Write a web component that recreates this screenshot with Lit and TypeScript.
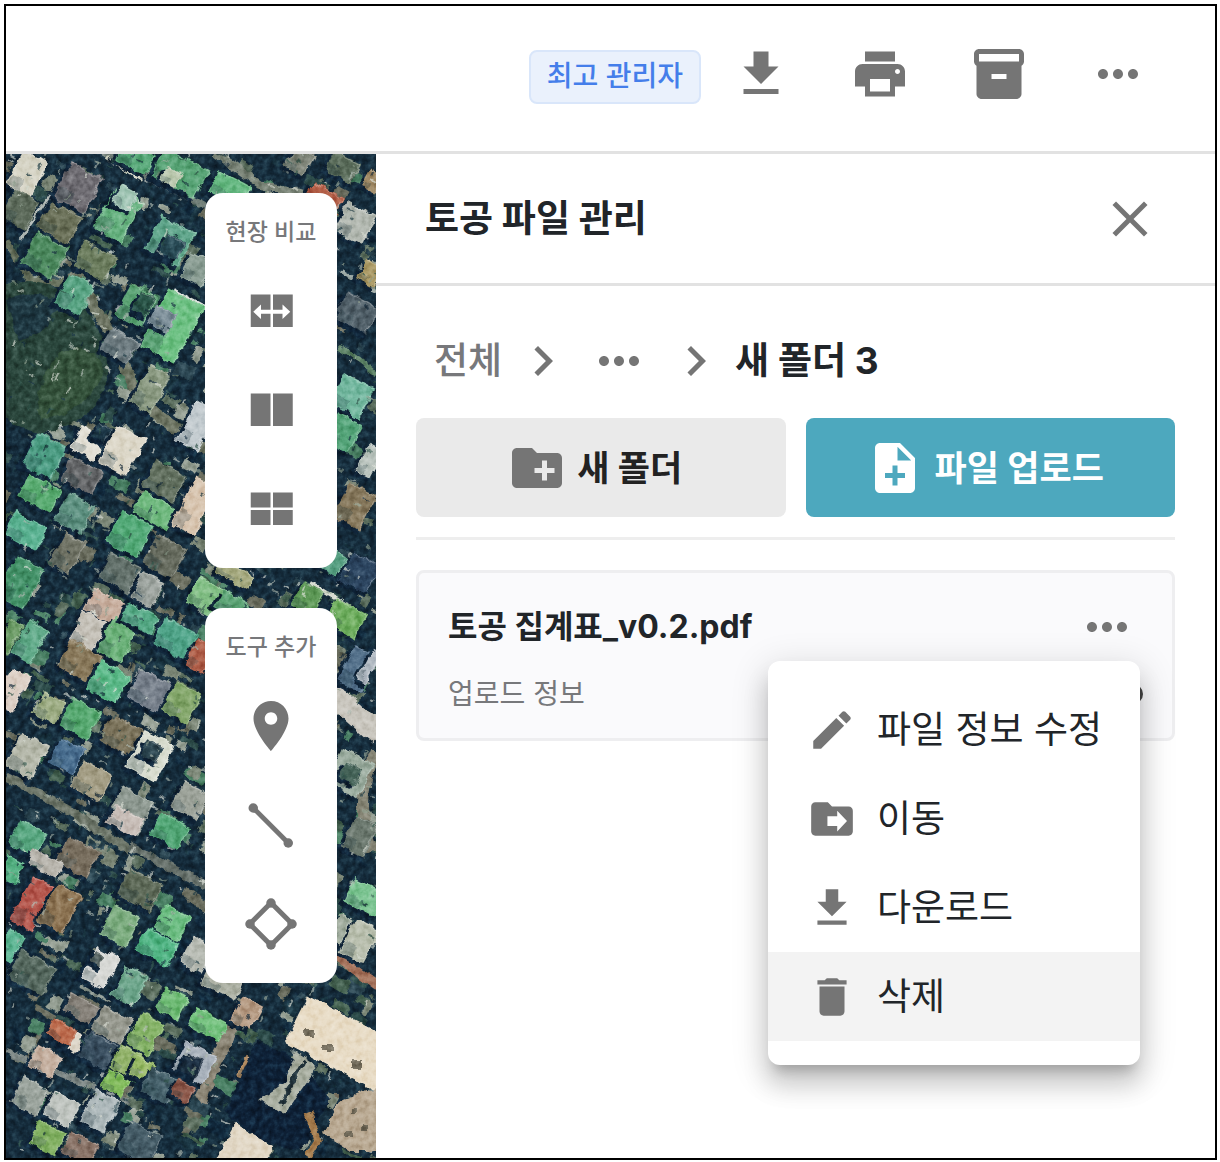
import { LitElement, html, svg, css } from "lit";
import { customElement, property, state } from "lit/decorators.js";

const ICONS: Record<string, unknown> = {
  download: svg`<path d="M19 9h-4V3H9v6H5l7 7 7-7zM5 18v2h14v-2H5z"/>`,
  print: svg`<path d="M19 8H5c-1.66 0-3 1.34-3 3v6h4v4h12v-4h4v-6c0-1.66-1.34-3-3-3zm-3 11H8v-5h8v5zm3-7c-.55 0-1-.45-1-1s.45-1 1-1 1 .45 1 1-.45 1-1 1zm-1-9H6v4h12V3z"/>`,
  archive: svg`<path d="M20 2H4c-1 0-2 .9-2 2v3.01c0 .72.43 1.34 1 1.69V20c0 1.1 1.1 2 2 2h14c.9 0 2-.9 2-2V8.7c.57-.35 1-.97 1-1.69V4c0-1.1-1-2-2-2zm-5 12H9v-2h6v2zm5-7H4V4h16v3z"/>`,
  more: svg`<path d="M6 10c-1.1 0-2 .9-2 2s.9 2 2 2 2-.9 2-2-.9-2-2-2zm12 0c-1.1 0-2 .9-2 2s.9 2 2 2 2-.9 2-2-.9-2-2-2zm-6 0c-1.1 0-2 .9-2 2s.9 2 2 2 2-.9 2-2-.9-2-2-2z"/>`,
  close: svg`<path d="M19 6.41L17.59 5 12 10.59 6.41 5 5 6.41 10.59 12 5 17.59 6.41 19 12 13.41 17.59 19 19 17.59 13.41 12z"/>`,
  chevron: svg`<path d="M10 6L8.59 7.41 13.17 12l-4.58 4.59L10 18l6-6z"/>`,
  newFolder: svg`<path d="M20 6h-8l-2-2H4c-1.11 0-1.99.89-1.99 2L2 18c0 1.11.89 2 2 2h16c1.11 0 2-.89 2-2V8c0-1.11-.89-2-2-2zm-1 8h-3v3h-2v-3h-3v-2h3V9h2v3h3v2z"/>`,
  newFile: svg`<path d="M14 2H6c-1.1 0-1.99.9-1.99 2L4 20c0 1.1.89 2 1.99 2H18c1.1 0 2-.9 2-2V8l-6-6zm2 14h-3v3h-2v-3H8v-2h3v-3h2v3h3v2zm-3-7V3.5L18.5 9H13z"/>`,
  edit: svg`<path d="M3 17.25V21h3.75L17.81 9.94l-3.75-3.75L3 17.25zM20.71 7.04c.39-.39.39-1.02 0-1.41l-2.34-2.34c-.39-.39-1.02-.39-1.41 0l-1.83 1.83 3.75 3.75 1.83-1.83z"/>`,
  move: svg`<path d="M20 6h-8l-2-2H4c-1.1 0-1.99.9-1.99 2L2 18c0 1.1.9 2 2 2h16c1.1 0 2-.9 2-2V8c0-1.1-.9-2-2-2zm-5.500 12v-2.700h-4.700v-4.600h4.700V8l4.700 5-4.700 5z"/>`,
  trash: svg`<path d="M6 19c0 1.1.9 2 2 2h8c1.1 0 2-.9 2-2V7H6v12zM19 4h-3.500l-1-1h-5l-1 1H5v2h14V4z"/>`,
  pin: svg`<path d="M12 2C8.130 2 5 5.130 5 9c0 5.250 7 13 7 13s7-7.750 7-13c0-3.870-3.130-7-7-7zm0 9.500c-1.380 0-2.500-1.120-2.500-2.500s1.120-2.500 2.500-2.500 2.500 1.120 2.500 2.500-1.120 2.500-2.500 2.500z"/>`,
  swipe: svg`<path d="M3.900 5.400h7.900v13H3.900zM12.800 5.400h7.900v13h-7.900z"/><path fill="#fff" d="M4.900 12.300l3.100-2.900v2.100h8.600V9.400l3.100 2.900-3.100 2.900v-2.100H8v2.100z"/>`,
  split: svg`<path d="M3.900 5.400h7.900v13H3.900zM12.800 5.400h7.900v13h-7.900z"/>`,
  quad: svg`<path d="M3.900 5.400h7.900v6H3.900zM12.800 5.400h7.900v6h-7.900zM3.900 12.400h7.900v6H3.900zM12.800 12.400h7.900v6h-7.900z"/>`,
  line: svg`<path d="M4.900 5.200L18.900 19.200" stroke="currentColor" stroke-width="1.900"/><circle cx="4.900" cy="5.200" r="1.900"/><circle cx="18.900" cy="19.200" r="1.900"/>`,
  polygon: svg`<path d="M12 3.500L20.500 12 12 20.500 3.500 12z" fill="none" stroke="currentColor" stroke-width="2"/><circle cx="12" cy="3.600" r="1.900"/><circle cx="20.400" cy="12" r="1.900"/><circle cx="12" cy="20.400" r="1.900"/><circle cx="3.600" cy="12" r="1.900"/>`,
};

@customElement("ui-icon")
class UiIcon extends LitElement {
  @property() name = "";
  static styles = css`
    :host { display: block; flex: none; width: 60px; height: 60px; color: #757575; }
    svg { display: block; width: 100%; height: 100%; fill: currentColor; }
  `;
  render() {
    return html`<svg viewBox="0 0 24 24" aria-hidden="true">${ICONS[this.name]}</svg>`;
  }
}

/* Rooftops: centre x, centre y, width, depth, colour. */
type Roof = [number, number, number, number, string];
const ROOFS: Roof[] = [
  [27, 173, 26, 38, "#d5d3c4"], [78, 187, 34, 38, "#6f6d73"], [60, 222, 34, 28, "#6a7058"], [20, 208, 28, 30, "#5e6c5c"],
  [45, 255, 34, 34, "#4d8a5f"], [118, 214, 30, 44, "#69b382"], [125, 197, 18, 18, "#a5c8b8"], [95, 260, 34, 26, "#6c7d5e"],
  [75, 293, 26, 32, "#5aa585"], [180, 172, 48, 30, "#59a577"], [172, 176, 16, 14, "#bcc9b0"], [135, 156, 34, 20, "#57a878"],
  [170, 240, 36, 36, "#62a78d"], [172, 246, 18, 18, "#284a55"], [230, 188, 34, 22, "#67b983"], [137, 305, 28, 34, "#5aa273"],
  [144, 303, 14, 20, "#2a5548"], [172, 325, 38, 62, "#6ec184"], [162, 318, 20, 20, "#7e909a"], [196, 268, 22, 26, "#8a9d93"],
  [120, 345, 30, 24, "#6f7d82"], [150, 388, 22, 42, "#8c9b83"], [197, 425, 22, 44, "#c4ccd0"], [45, 455, 32, 36, "#4d9d84"],
  [88, 442, 26, 24, "#e3e0d6"], [122, 450, 30, 40, "#dcd7c8"], [102, 432, 14, 14, "#1b3545"], [82, 475, 34, 24, "#66686a"],
  [165, 480, 34, 28, "#62705f"], [325, 197, 34, 16, "#b5624a"], [355, 222, 30, 30, "#b2b8b0"], [370, 272, 18, 20, "#ad9c68"],
  [343, 166, 28, 20, "#5c6e5c"], [372, 180, 14, 18, "#a08a66"], [357, 312, 34, 28, "#52616a"], [352, 395, 32, 32, "#74b8a0"],
  [343, 432, 26, 30, "#55a57a"], [370, 460, 16, 30, "#b9c3bd"], [300, 160, 20, 22, "#7e8478"],
  [40, 492, 34, 24, "#5aac72"], [26, 530, 34, 24, "#5bb292"], [75, 512, 28, 30, "#5f9282"], [155, 510, 36, 22, "#6fb87e"],
  [130, 533, 34, 34, "#53aa78"], [195, 505, 24, 52, "#d8c5b0"], [165, 555, 32, 32, "#666b5e"], [120, 572, 34, 26, "#62706a"],
  [148, 589, 22, 28, "#9da49f"], [20, 582, 30, 44, "#45936a"], [68, 552, 22, 34, "#6f7264"], [105, 605, 34, 22, "#c9b0a0"],
  [88, 630, 26, 32, "#c5c1b8"], [118, 638, 26, 38, "#6cb27a"], [140, 617, 32, 18, "#58ab88"], [205, 595, 26, 28, "#82be85"],
  [232, 604, 28, 18, "#5ea577"], [176, 638, 36, 28, "#52a68b"], [200, 655, 18, 28, "#b0604a"], [80, 660, 34, 28, "#8a7a5c"],
  [108, 681, 32, 30, "#5dba8a"], [30, 640, 22, 36, "#62ab8a"], [9, 636, 14, 32, "#6a9a64"], [12, 690, 20, 38, "#dccfc5"],
  [150, 690, 34, 30, "#79828d"], [182, 702, 28, 32, "#83a66a"], [50, 707, 26, 24, "#9fae86"], [80, 718, 32, 30, "#58aa72"],
  [122, 735, 34, 28, "#7c745c"], [27, 755, 28, 36, "#b5b8aa"], [67, 755, 26, 26, "#4a6f90"], [92, 780, 30, 28, "#a39d84"],
  [150, 755, 32, 40, "#d9ddd0"], [152, 750, 18, 16, "#2d4650"], [130, 810, 34, 36, "#8f9a92"], [190, 800, 28, 28, "#9da39a"],
  [235, 574, 34, 12, "#a6aa80"], [308, 598, 22, 26, "#5f9a58"], [345, 617, 34, 26, "#6fae5f"], [355, 505, 28, 36, "#86785c"],
  [330, 560, 24, 20, "#59a184"], [360, 572, 30, 30, "#2c4560"], [358, 668, 26, 38, "#53708a"], [370, 665, 8, 34, "#b5bdc5"],
  [350, 772, 34, 36, "#9cada0"], [350, 772, 16, 16, "#426055"], [360, 835, 24, 34, "#6d7a70"],
  [28, 838, 30, 26, "#5aa882"], [12, 868, 18, 20, "#57b285"], [78, 856, 34, 28, "#7a7060"], [45, 862, 32, 14, "#b9b6ae"],
  [125, 820, 30, 18, "#c8beb8"], [170, 830, 30, 24, "#54a878"], [33, 903, 24, 48, "#b4564c"], [60, 908, 26, 42, "#8c7352"],
  [140, 888, 36, 28, "#5e6a58"], [10, 945, 18, 28, "#5cb492"], [32, 972, 38, 28, "#56695f"], [120, 925, 28, 32, "#7dad80"],
  [172, 922, 26, 26, "#6cbd82"], [157, 946, 34, 24, "#52b585"], [198, 955, 24, 28, "#b8bcb4"], [100, 967, 24, 34, "#d8d9d6"],
  [98, 958, 10, 10, "#54605e"], [130, 985, 24, 32, "#6fa78d"], [222, 982, 36, 18, "#aeb2a5"], [82, 1008, 30, 18, "#858078"],
  [112, 1025, 32, 26, "#97998f"], [172, 1003, 24, 22, "#72bd78"], [208, 1024, 34, 20, "#72c07c"], [145, 1033, 24, 34, "#86b368"],
  [68, 1038, 30, 18, "#ded7ca"], [62, 1031, 24, 16, "#bb6a4c"], [45, 1060, 26, 22, "#c5b0a0"], [98, 1050, 30, 26, "#3a4f60"],
  [125, 1060, 20, 24, "#93b36b"], [142, 1068, 20, 18, "#9abb68"], [115, 1082, 22, 18, "#82bb5c"], [30, 1095, 28, 28, "#9aa39c"],
  [62, 1108, 28, 24, "#c0c5c0"], [100, 1110, 26, 34, "#adb8ba"], [48, 1137, 28, 24, "#82b062"], [80, 1148, 30, 22, "#8a7468"],
  [140, 1142, 34, 32, "#465d68"], [160, 1085, 30, 26, "#45606a"], [183, 1090, 18, 16, "#8a5648"], [195, 1062, 32, 30, "#a9b2bc"],
  [192, 1064, 16, 16, "#1b2d40"], [246, 1012, 20, 26, "#b59a82"], [248, 1068, 14, 22, "#b08a60"],
  [365, 897, 34, 24, "#7cc492"], [360, 940, 24, 36, "#b9bfae"], [340, 928, 14, 26, "#9fab9c"],
];

const ROADS: [string, number, string][] = [
  ["M100 150 L205 205", 7, "#6f7d76"], ["M215 152 L262 185 L340 200", 9, "#7b8578"], ["M6 240 L32 280 L70 282", 7, "#66705c"],
  ["M72 268 L112 335 L140 400 L206 450", 11, "#6d7462"], ["M108 157 L142 178", 4, "#d5d8c8"], ["M175 290 L206 307", 4, "#dfe4de"],
  ["M6 775 L75 812 L130 850", 9, "#6c7568"], ["M130 845 L206 885", 8, "#66706a"], ["M330 690 L380 735", 22, "#c9c6be"],
  ["M376 750 Q352 800 372 850", 12, "#858474"], ["M337 955 L378 985", 9, "#a5735c"], ["M245 1000 L215 1060 L200 1100", 14, "#8a8474"],
  ["M145 495 L178 514", 4, "#e2e3da"], ["M20 238 L50 195", 3, "#b0b8b4"], ["M88 282 L112 250", 3, "#a6b2b0"],
  ["M310 582 L360 612", 4, "#d8dcd2"], ["M340 345 L376 372", 5, "#5f8468"], ["M80 985 L110 1000", 3, "#8c9790"],
  ["M6 1050 L90 1085 L130 1100", 6, "#7e8886"], ["M340 270 L376 290", 4, "#9eaaa6"],
];

/* Small repeatable fragments: yards, walls and parked cars between the roofs. */
const randomFrom = (start: number) => {
  let seed = start;
  return () => (seed = (seed * 16807) % 2147483647) / 2147483647;
};

const clutter = () => {
  const tones = ["#10273a", "#2d4c4a", "#43604f", "#5d7060", "#1a3542", "#7d8878", "#4a8064", "#96a094", "#2b4652", "#6a6d5e"];
  const next = randomFrom(7781);
  return Array.from({ length: 900 }, () => {
    const x = 6 + next() * 370;
    const y = 150 + next() * 1006;
    const w = 5 + next() * 18;
    const h = 3 + next() * 13;
    return svg`<rect x=${x} y=${y} width=${w} height=${h} fill=${tones[Math.floor(next() * tones.length)]} transform="rotate(28 ${x} ${y})"/>`;
  });
};

const specks = () => {
  const tones = ["#122a3c", "#d9ddd4", "#a9b5ac", "#1c3a44", "#8fa08f", "#31564c"];
  const next = randomFrom(4243);
  return Array.from({ length: 1200 }, () => {
    const x = 6 + next() * 370;
    const y = 150 + next() * 1006;
    const w = 2 + next() * 6;
    const turn = next() > 0.5 ? 28 : -62;
    return svg`<rect x=${x} y=${y} width=${w} height="2" opacity=".65" fill=${tones[Math.floor(next() * tones.length)]} transform="rotate(${turn} ${x} ${y})"/>`;
  });
};

@customElement("aerial-map")
class AerialMap extends LitElement {
  static styles = css`
    :host { display: block; overflow: hidden; background: #152c3c; }
    svg { display: block; width: 100%; height: 100%; }
  `;
  render() {
    return html`<svg viewBox="6 153 370 1006" preserveAspectRatio="xMidYMin slice" role="img" aria-label="항공 지도">
      <defs>
        <filter id="rough" x="0" y="0" width="100%" height="100%" color-interpolation-filters="sRGB">
          <feTurbulence type="fractalNoise" baseFrequency="0.09" numOctaves="3" seed="4" result="warp"/>
          <feDisplacementMap in="SourceGraphic" in2="warp" scale="8" xChannelSelector="R" yChannelSelector="G" result="moved"/>
          <feTurbulence type="fractalNoise" baseFrequency="0.16" numOctaves="3" seed="9"/>
          <feColorMatrix values=".7 0 0 0 .15  .7 0 0 0 .15  .7 0 0 0 .15  0 0 0 0 1" result="grain"/>
          <feBlend in="grain" in2="moved" mode="soft-light"/>
          <feGaussianBlur stdDeviation=".6"/>
        </filter>
      </defs>
      <g filter="url(#rough)">
        <rect x="-10" y="140" width="400" height="1030" fill="#152c3c"/>
        ${clutter()}
        ${ROADS.map(([d, w, c]) => svg`<path d=${d} fill="none" stroke=${c} stroke-width=${w}/>`)}
        <path d="M0 285 Q40 270 75 300 Q110 330 108 375 Q100 420 45 432 Q15 430 0 410z" fill="#2a463c"/>
        <path d="M6 300 Q30 285 60 300 Q50 330 20 340z" fill="#1d3640"/>
        <path d="M60 350 Q100 340 104 375 Q80 415 40 420 Q30 390 60 350z" fill="#35533c"/>
        ${ROOFS.map(([x, y, w, h, c]) => svg`<g transform="rotate(28 ${x} ${y})">
          <path d="M${x - w / 2 - 4} ${y - h / 2 + 4}h${w + 4}v${h + 2}h${-w - 4}z" fill="#0f2337"/>
          <rect x=${x - w / 2 - 1} y=${y - h / 2 - 1} width=${w + 2} height=${h + 2} fill=${c}/>
          <path d="M${x - w / 2} ${y - h / 2}h${w}M${x + w / 2} ${y - h / 2}v${h}" stroke="#fff" stroke-width="1" opacity=".25"/>
          <rect x=${x - w / 2} y=${y + h / 6} width=${w / 2} height=${h / 3} fill="#16303c" opacity=".22"/>
        </g>`)}
        ${specks()}
        <path d="M256 1040 L300 1060 L330 1100 L300 1150 L262 1140 L225 1110z" fill="#0e2137"/>
        <path d="M308 994 L380 1032 V1092 L284 1042z" fill="#e8dcc6"/>
        <path d="M296 1052 L284 1082 L260 1098 L284 1114 L318 1066z" fill="#a8aea0"/>
        <path d="M304 1060 L280 1104" stroke="#22343c" stroke-width="4"/>
        <path d="M236 1122 L272 1145 L268 1165 H212z" fill="#e2d8c6"/>
        <path d="M340 1100 L380 1085 V1150 L350 1150 L322 1132z" fill="#b9a992"/>
        <path d="M308 1112 L318 1140 L308 1156" stroke="#a2794a" stroke-width="7" fill="none"/>
        <path d="M305 1030h8v5h-8zM322 1044h12v5h-12zM352 1058h8v10h-8zM334 1092h6v4h-6zM350 1108h7v4h-7zM362 1124h6v6h-6zM345 1132h8v3h-8z" fill="#77705f"/>
      </g>
    </svg>`;
  }
}

@customElement("app-root")
class AppRoot extends LitElement {
  @state() private menuOpen = true;

  static styles = css`
    :host { display: block; font-family: Inter, "Noto Sans CJK KR", sans-serif; color: #212529; }
    * { box-sizing: border-box; }
    button { font: inherit; color: inherit; margin: 0; padding: 0; border: 0; background: none; cursor: pointer; }
    h1, h2, h3, p, ol, ul { margin: 0; padding: 0; list-style: none; font-weight: 400; }
    .page { min-height: 100vh; padding: 4px 3px 2px 4px; display: flex; background: #fff; }
    .frame { flex: 1; min-width: 0; border: 2px solid #000; display: flex; flex-direction: column; }
    .topbar { height: 148px; padding: 0 67px 47px 24px; border-bottom: 3px solid #e2e2e2; display: flex; align-items: flex-end; justify-content: flex-end; gap: 30px; }
    .role { height: 54px; padding: 0 16px; border: 2px solid #d9e6fa; border-radius: 8px; background: #eaf1fc; color: #447eea; font-size: 28px; line-height: 48px; font-weight: 500; white-space: nowrap; }
    .actions { display: flex; gap: 59px; }
    .body { flex: 1; display: grid; grid-template-columns: minmax(0, 370fr) minmax(0, 839fr); }
    .site { position: relative; padding: 39px; display: flex; flex-direction: column; align-items: flex-end; gap: 40px; }
    aerial-map { position: absolute; inset: 0; }
    .tools { position: relative; width: 132px; padding: 20px 0 29px; border-radius: 18px; background: #fff; display: flex; flex-direction: column; align-items: center; }
    .tools h2 { font-size: 23px; line-height: 39px; font-weight: 500; color: #77787b; white-space: nowrap; }
    .tool-list { margin-top: 29px; display: flex; flex-direction: column; gap: 39px; }
    .panel { min-width: 0; }
    .panel-head { height: 132px; padding: 0 55px 0 49px; border-bottom: 3px solid #e2e2e2; display: flex; align-items: center; justify-content: space-between; }
    .panel-head h1 { font-size: 37px; line-height: 48px; font-weight: 700; }
    .content { padding: 45px 40px 0; }
    .crumbs { display: flex; align-items: center; height: 60px; padding-left: 18px; font-size: 37px; line-height: 48px; }
    .crumbs li { display: flex; align-items: center; }
    .crumbs a { color: #77787b; text-decoration: none; margin-right: 11px; font-weight: 500; }
    .crumbs button { margin: 0 17px 0 16px; }
    .crumbs strong { font-weight: 700; margin-left: 9px; }
    .buttons { margin-top: 27px; display: grid; grid-template-columns: 1fr 1fr; gap: 20px; padding-bottom: 20px; border-bottom: 3px solid #eee; }
    .wide { height: 99px; padding-right: 12px; border-radius: 8px; background: #eaeaea; display: flex; align-items: center; justify-content: center; gap: 10px; font-size: 35px; line-height: 48px; font-weight: 700; color: #222; }
    .primary { background: #4da8be; color: #fff; }
    .primary ui-icon { color: #fff; }
    .file { position: relative; margin-top: 30px; height: 171px; border: 3px solid #eeeef0; border-radius: 8px; background: #fafafc; padding: 24px 29px 0; }
    .row { display: flex; align-items: center; justify-content: space-between; height: 60px; }
    .row + .row { height: 74px; }
    .file h3 { font-size: 32px; line-height: 44px; font-weight: 700; }
    .row button { margin-right: 6px; }
    .info { font-size: 28px; line-height: 40px; color: #77787b; }
    .info + button { margin: 0; width: 20px; height: 20px; border-radius: 50%; background: #444; }
    .menu { position: absolute; top: 88px; right: 32px; width: 372px; padding: 24px 0; border-radius: 12px; background: #fff; box-shadow: 0 12px 12px -7px rgba(0,0,0,.2), 0 20px 25px 2px rgba(0,0,0,.14), 0 8px 35px 5px rgba(0,0,0,.12); }
    .menu button { width: 100%; height: 89px; padding-left: 39px; display: flex; align-items: center; gap: 20px; font-size: 37px; line-height: 48px; white-space: nowrap; }
    .menu button.current, .menu button:hover { background: #f3f3f3; }
    .menu ui-icon { width: 50px; height: 50px; }
  `;

  private tools(title: string, items: [string, string][]) {
    return html`<section class="tools">
      <h2>${title}</h2>
      <div class="tool-list">
        ${items.map(([icon, label]) => html`<button aria-label=${label}><ui-icon name=${icon}></ui-icon></button>`)}
      </div>
    </section>`;
  }

  render() {
    const actions = [["download", "다운로드"], ["print", "인쇄"], ["archive", "보관"], ["more", "더보기"]];
    const menu = [["edit", "파일 정보 수정"], ["move", "이동"], ["download", "다운로드"], ["trash", "삭제"]];
    return html`<div class="page"><div class="frame">
      <header class="topbar">
        <span class="role">최고 관리자</span>
        <div class="actions">
          ${actions.map(([icon, label]) => html`<button aria-label=${label}><ui-icon name=${icon}></ui-icon></button>`)}
        </div>
      </header>
      <div class="body">
        <div class="site">
          <aerial-map></aerial-map>
          ${this.tools("현장 비교", [["swipe", "밀어서 비교"], ["split", "2분할"], ["quad", "4분할"]])}
          ${this.tools("도구 추가", [["pin", "위치"], ["line", "선"], ["polygon", "영역"]])}
        </div>
        <main class="panel">
          <div class="panel-head">
            <h1>토공 파일 관리</h1>
            <button aria-label="닫기"><ui-icon name="close"></ui-icon></button>
          </div>
          <div class="content">
            <nav aria-label="폴더 경로"><ol class="crumbs">
              <li><a href="#all">전체</a><ui-icon name="chevron"></ui-icon></li>
              <li><button aria-label="중간 폴더"><ui-icon name="more"></ui-icon></button><ui-icon name="chevron"></ui-icon></li>
              <li><strong aria-current="page">새 폴더 3</strong></li>
            </ol></nav>
            <div class="buttons">
              <button class="wide"><ui-icon name="newFolder"></ui-icon>새 폴더</button>
              <button class="wide primary"><ui-icon name="newFile"></ui-icon>파일 업로드</button>
            </div>
            <article class="file">
              <div class="row">
                <h3>토공 집계표_v0.2.pdf</h3>
                <button aria-label="파일 메뉴" aria-expanded=${this.menuOpen} @click=${() => (this.menuOpen = !this.menuOpen)}><ui-icon name="more"></ui-icon></button>
              </div>
              <div class="row">
                <p class="info">업로드 정보</p>
                <button aria-label="상세 정보"></button>
              </div>
              ${this.menuOpen
                ? html`<ul class="menu">
                    ${menu.map(([icon, label]) => html`<li><button class=${icon === "trash" ? "current" : ""}><ui-icon name=${icon}></ui-icon>${label}</button></li>`)}
                  </ul>`
                : ""}
            </article>
          </div>
        </main>
      </div>
    </div></div>`;
  }
}
